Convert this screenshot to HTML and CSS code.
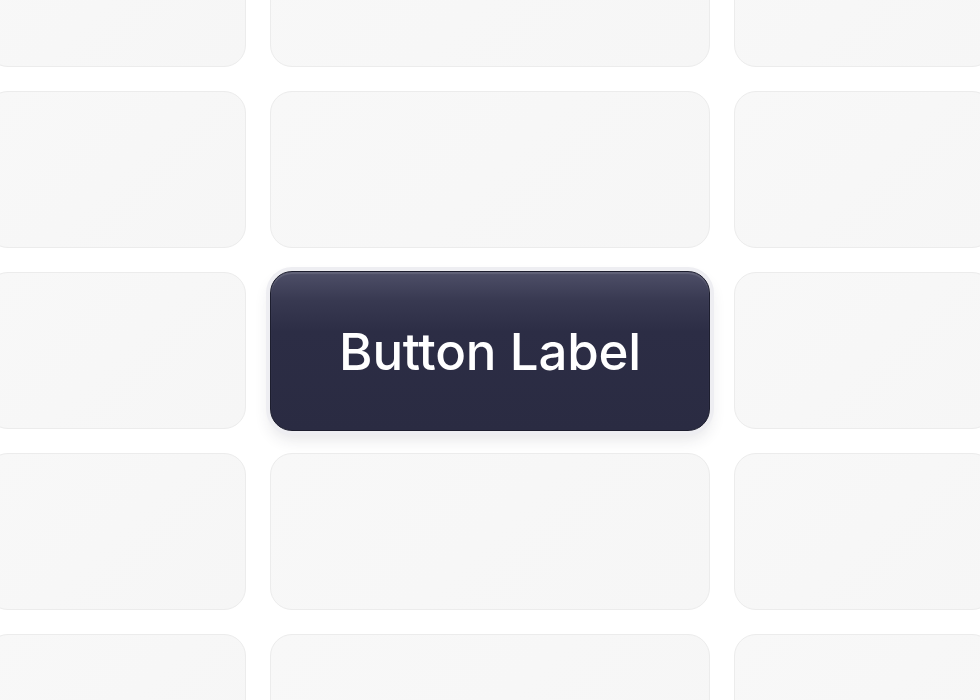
FILE: index.html
```html
<!DOCTYPE html>
<html lang="en">
<head>
    <meta charset="UTF-8">
    <meta name="viewport" content="width=device-width, initial-scale=1.0">
    <title>Button Label</title>
    <link rel="stylesheet" href="styles.css">
</head>
<body>
    <div class="board">
        <div class="tile"></div>
        <div class="tile"></div>
        <div class="tile"></div>

        <div class="tile"></div>
        <div class="tile"></div>
        <div class="tile"></div>

        <div class="tile"></div>
        <div class="slot">
            <button class="main-button">Button Label</button>
        </div>
        <div class="tile"></div>

        <div class="tile"></div>
        <div class="tile"></div>
        <div class="tile"></div>

        <div class="tile"></div>
        <div class="tile"></div>
        <div class="tile"></div>
    </div>
</body>
</html>
```

FILE: styles.css
```css
html, body {
    margin: 0;
    padding: 0;
    background-color: #ffffff;
    overflow: hidden;
}
body {
    width: 980px;
    height: 700px;
    font-family: Inter, "Noto Sans", sans-serif;
}
.board {
    display: grid;
    grid-template-columns: 260px 440px 260px;
    grid-auto-rows: 157px;
    column-gap: 24px;
    row-gap: 24px;
    margin-left: -14px;
    margin-top: -90px;
}
.tile {
    background: linear-gradient(135deg, #f8f8f8, #f6f6f6);
    border: 1px solid #ececec;
    border-radius: 22px;
}
.slot {
    display: flex;
}
.main-button {
    flex: 1;
    margin: -1px 0 -2px 0;
    font-family: Inter, "Noto Sans", sans-serif;
    font-size: 51px;
    font-weight: 500;
    letter-spacing: -0.2px;
    color: #ffffff;
    background: linear-gradient(180deg, #4e4f68 0%, #383951 18%, #2c2d45 38%, #2a2b42 100%);
    border: 1.5px solid #1d1e2f;
    border-radius: 22px;
    box-shadow: 0 0 0 4px #eeeef2, 0 8px 16px rgba(40, 40, 60, 0.12), inset 0 2px 1px rgba(255, 255, 255, 0.12);
    cursor: pointer;
    padding: 0;
}
```
